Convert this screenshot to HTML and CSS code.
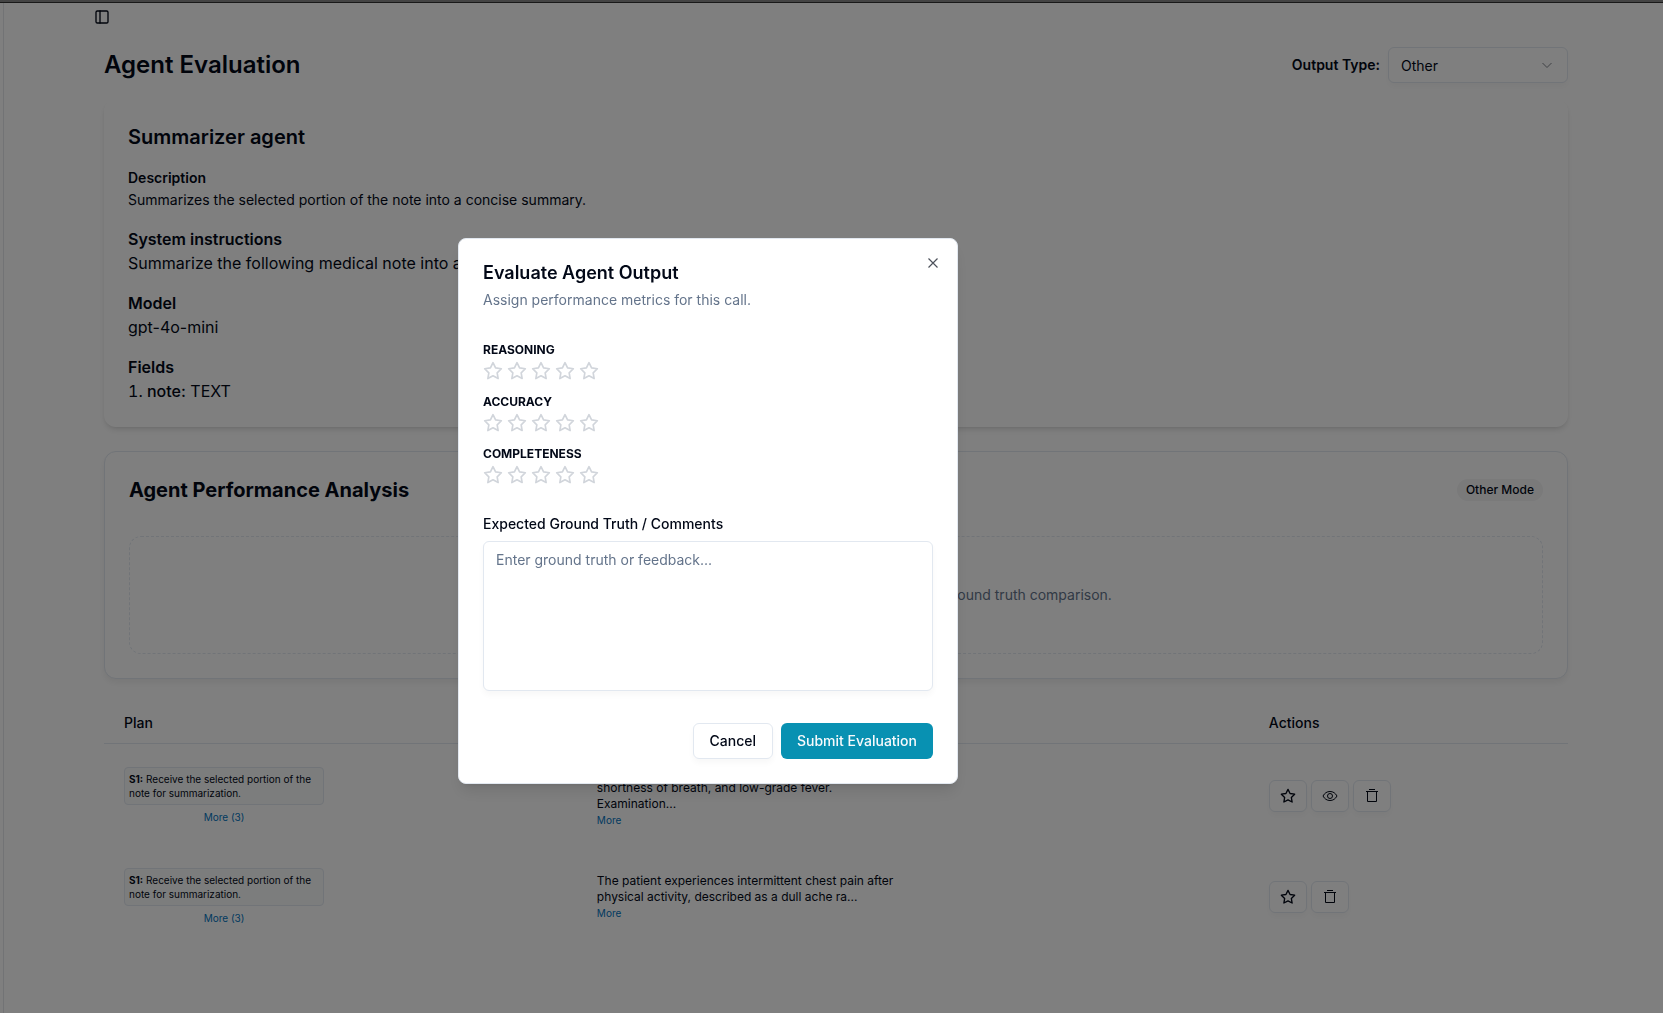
FILE: index.html
```html
<!DOCTYPE html>
<html lang="en">
<head>
    <meta charset="UTF-8">
    <meta name="viewport" content="width=device-width, initial-scale=1.0">
    <title>Agent Evaluation</title>
    <link rel="stylesheet" href="styles.css">
</head>
<body>
    <svg class="icon-defs" aria-hidden="true">
        <symbol id="icon-star" viewBox="0 0 24 24">
            <polygon points="12 2 15.09 8.26 22 9.27 17 14.14 18.18 21.02 12 17.77 5.82 21.02 7 14.14 2 9.27 8.91 8.26 12 2" fill="none" stroke="currentColor" stroke-width="2" stroke-linecap="round" stroke-linejoin="round"/>
        </symbol>
        <symbol id="icon-eye" viewBox="0 0 16 16">
            <path d="M1 8C2.6 5 5 3.500 8 3.500S13.400 5 15 8C13.400 11 11 12.500 8 12.500S2.600 11 1 8Z" fill="none" stroke="currentColor" stroke-linejoin="round"/>
            <circle cx="8" cy="8" r="2.500" fill="none" stroke="currentColor"/>
        </symbol>
        <symbol id="icon-trash" viewBox="0 0 16 16">
            <path d="M5 1.500h6M2 3.500h12M3.500 3.500v10h9v-10" fill="none" stroke="currentColor"/>
        </symbol>
    </svg>

    <div class="topbar"></div>
    <div class="layout">
        <aside class="sidebar"></aside>
        <main class="main">
            <button class="sidebar-toggle" aria-label="Toggle sidebar">
                <svg width="16" height="16" viewBox="0 0 24 24" fill="none" stroke="currentColor" stroke-width="2" stroke-linecap="round" stroke-linejoin="round"><rect x="3" y="3" width="18" height="18" rx="2"/><path d="M9 3v18"/></svg>
            </button>

            <div class="content">
                <div class="page-header">
                    <h1>Agent Evaluation</h1>
                    <div class="output-type">
                        <label for="output_type">Output Type:</label>
                        <div class="select-wrap">
                            <select id="output_type">
                                <option>Other</option>
                            </select>
                            <svg class="chevron" width="16" height="16" viewBox="0 0 16 16" fill="none" stroke="currentColor"><path d="M3.500 6 8 10.500 12.500 6"/></svg>
                        </div>
                    </div>
                </div>

                <section class="card agent-card">
                    <h2>Summarizer agent</h2>
                    <div class="field small">
                        <h3>Description</h3>
                        <p>Summarizes the selected portion of the note into a concise summary.</p>
                    </div>
                    <div class="field">
                        <h3>System instructions</h3>
                        <p>Summarize the following medical note into a concise summary.</p>
                    </div>
                    <div class="field">
                        <h3>Model</h3>
                        <p>gpt-4o-mini</p>
                    </div>
                    <div class="field">
                        <h3>Fields</h3>
                        <ol>
                            <li><span class="field-name">note:</span> TEXT</li>
                        </ol>
                    </div>
                </section>

                <section class="card analysis-card">
                    <div class="analysis-header">
                        <h2>Agent Performance Analysis</h2>
                        <span class="badge">Other Mode</span>
                    </div>
                    <div class="empty">Add expected outputs to these calls in the table to enable ground truth comparison.</div>
                </section>

                <table class="calls">
                    <thead>
                        <tr>
                            <th class="col-plan">Plan</th>
                            <th class="col-input">Input</th>
                            <th class="col-actions">Actions</th>
                        </tr>
                    </thead>
                    <tbody>
                        <tr>
                            <td>
                                <div class="plan">
                                    <div class="step"><b>S1:</b> Receive the selected portion of the note for summarization.</div>
                                    <a class="more" href="#">More (3)</a>
                                </div>
                            </td>
                            <td>
                                <p class="note">The patient presents with a dry cough, mild shortness of breath, and low-grade fever. Examination...</p>
                                <a class="more" href="#">More</a>
                            </td>
                            <td>
                                <div class="actions">
                                    <button aria-label="Evaluate"><svg width="16" height="16"><use href="#icon-star"/></svg></button>
                                    <button aria-label="View"><svg width="16" height="16"><use href="#icon-eye"/></svg></button>
                                    <button aria-label="Delete"><svg width="16" height="16"><use href="#icon-trash"/></svg></button>
                                </div>
                            </td>
                        </tr>
                        <tr>
                            <td>
                                <div class="plan">
                                    <div class="step"><b>S1:</b> Receive the selected portion of the note for summarization.</div>
                                    <a class="more" href="#">More (3)</a>
                                </div>
                            </td>
                            <td>
                                <p class="note">The patient experiences intermittent chest pain after physical activity, described as a dull ache ra...</p>
                                <a class="more" href="#">More</a>
                            </td>
                            <td>
                                <div class="actions">
                                    <button aria-label="Evaluate"><svg width="16" height="16"><use href="#icon-star"/></svg></button>
                                    <button aria-label="Delete"><svg width="16" height="16"><use href="#icon-trash"/></svg></button>
                                </div>
                            </td>
                        </tr>
                    </tbody>
                </table>
            </div>
        </main>
    </div>

    <div class="overlay">
        <div class="modal" role="dialog" aria-modal="true" aria-labelledby="modal_title">
            <button class="close" aria-label="Close">
                <svg width="16" height="16" viewBox="0 0 16 16" fill="none" stroke="currentColor" stroke-width="1.200"><path d="M3.500 3.500l9 9M12.500 3.500l-9 9"/></svg>
            </button>
            <div class="modal-header">
                <h2 id="modal_title">Evaluate Agent Output</h2>
                <p>Assign performance metrics for this call.</p>
            </div>

            <div class="metrics">
                <div class="metric" role="group" aria-labelledby="m_reasoning">
                    <span id="m_reasoning" class="metric-name">Reasoning</span>
                    <div class="stars">
                        <button aria-label="1 star"><svg width="20" height="20"><use href="#icon-star"/></svg></button>
                        <button aria-label="2 stars"><svg width="20" height="20"><use href="#icon-star"/></svg></button>
                        <button aria-label="3 stars"><svg width="20" height="20"><use href="#icon-star"/></svg></button>
                        <button aria-label="4 stars"><svg width="20" height="20"><use href="#icon-star"/></svg></button>
                        <button aria-label="5 stars"><svg width="20" height="20"><use href="#icon-star"/></svg></button>
                    </div>
                </div>
                <div class="metric" role="group" aria-labelledby="m_accuracy">
                    <span id="m_accuracy" class="metric-name">Accuracy</span>
                    <div class="stars">
                        <button aria-label="1 star"><svg width="20" height="20"><use href="#icon-star"/></svg></button>
                        <button aria-label="2 stars"><svg width="20" height="20"><use href="#icon-star"/></svg></button>
                        <button aria-label="3 stars"><svg width="20" height="20"><use href="#icon-star"/></svg></button>
                        <button aria-label="4 stars"><svg width="20" height="20"><use href="#icon-star"/></svg></button>
                        <button aria-label="5 stars"><svg width="20" height="20"><use href="#icon-star"/></svg></button>
                    </div>
                </div>
                <div class="metric" role="group" aria-labelledby="m_completeness">
                    <span id="m_completeness" class="metric-name">Completeness</span>
                    <div class="stars">
                        <button aria-label="1 star"><svg width="20" height="20"><use href="#icon-star"/></svg></button>
                        <button aria-label="2 stars"><svg width="20" height="20"><use href="#icon-star"/></svg></button>
                        <button aria-label="3 stars"><svg width="20" height="20"><use href="#icon-star"/></svg></button>
                        <button aria-label="4 stars"><svg width="20" height="20"><use href="#icon-star"/></svg></button>
                        <button aria-label="5 stars"><svg width="20" height="20"><use href="#icon-star"/></svg></button>
                    </div>
                </div>
            </div>

            <div class="comments">
                <label for="comments">Expected Ground Truth / Comments</label>
                <textarea id="comments" placeholder="Enter ground truth or feedback..."></textarea>
            </div>

            <div class="modal-footer">
                <button class="btn">Cancel</button>
                <button class="btn btn-primary">Submit Evaluation</button>
            </div>
        </div>
    </div>
</body>
</html>
```

FILE: styles.css
```css
* {
    box-sizing: border-box;
}
body {
    margin: 0;
    min-height: 100vh;
    display: flex;
    flex-direction: column;
    background-color: #fff;
    color: #020817;
    font-family: Inter, sans-serif;
    font-size: 16px;
    line-height: 24px;
}
h1, h2, h3, p, ol {
    margin: 0;
    padding: 0;
}
button, select, textarea {
    font-family: inherit;
    color: inherit;
}
button {
    display: flex;
    align-items: center;
    justify-content: center;
    padding: 0;
    border: none;
    background: none;
    cursor: pointer;
}
.icon-defs {
    position: absolute;
    width: 0;
    height: 0;
}

/* page shell */
.topbar {
    height: 3px;
    background-color: #888;
    border-bottom: 1px solid #333;
}
.layout {
    flex: 1;
    display: flex;
}
.sidebar {
    width: 4px;
    border-right: 1px solid #e5e7eb;
}
.main {
    flex: 1;
    padding: 0 95px 0 84px;
}
.sidebar-toggle {
    width: 28px;
    height: 28px;
}
.content {
    margin: 16px 0 0 16px;
}
.page-header {
    display: flex;
    justify-content: space-between;
    align-items: center;
    margin-bottom: 16px;
}
h1 {
    font-size: 24px;
    line-height: 32px;
    font-weight: 600;
}
.output-type {
    display: flex;
    align-items: center;
    gap: 8px;
    font-size: 14px;
}
.output-type label {
    font-weight: 600;
}
.select-wrap {
    position: relative;
}
select {
    appearance: none;
    display: block;
    width: 180px;
    height: 36px;
    padding: 0 12px;
    border: 1px solid #e2e8f0;
    border-radius: 6px;
    background-color: #fff;
    font-size: 14px;
    box-shadow: 0 4px 6px rgba(0, 0, 0, 0.03);
}
.chevron {
    position: absolute;
    right: 13px;
    top: 10px;
    opacity: 0.5;
    pointer-events: none;
}

/* cards */
.card {
    margin-bottom: 24px;
    padding: 24px;
    border-radius: 12px;
    background-color: #fff;
    box-shadow: 0 4px 6px -1px rgba(0, 0, 0, 0.1), 0 2px 4px -2px rgba(0, 0, 0, 0.1);
}
.card h2 {
    font-size: 20px;
    line-height: 28px;
    font-weight: 600;
}
.field {
    margin-top: 16px;
}
.field h3 {
    font-size: 16px;
    font-weight: 600;
}
.small, .small h3 {
    font-size: 14px;
    line-height: 22px;
}
.field ol {
    list-style-position: inside;
}
.field-name {
    font-weight: 500;
}
.analysis-card {
    border: 1px solid #e2e8f0;
    box-shadow: 0 4px 6px rgba(0, 0, 0, 0.06);
}
.analysis-card h2 {
    font-weight: 700;
}
.analysis-header {
    display: flex;
    justify-content: space-between;
    align-items: center;
    margin-bottom: 32px;
}
.badge {
    padding: 3px 9px;
    border-radius: 12px;
    background-color: #f4f4f5;
    font-size: 12px;
    line-height: 16px;
    font-weight: 500;
}
.empty {
    padding: 48px;
    border: 1px dashed #e2e8f0;
    border-radius: 12px;
    text-align: center;
    font-size: 14px;
    line-height: 20px;
    color: #64748b;
}

/* calls table */
.calls {
    width: 100%;
    table-layout: fixed;
    border-spacing: 0;
}
.calls th {
    height: 41px;
    padding: 0 20px;
    border-bottom: 1px solid #e2e8f0;
    text-align: left;
    font-size: 14px;
    line-height: 20px;
    font-weight: 500;
}
.calls td {
    padding: 20px;
    vertical-align: middle;
    font-size: 12px;
    line-height: 16px;
}
.col-plan {
    width: 32.3%;
}
.col-actions {
    width: 21.8%;
}
.plan {
    display: flex;
    flex-direction: column;
    align-items: center;
    gap: 4px;
    width: 200px;
}
.step {
    padding: 4px;
    border: 1px solid #e2e8f0;
    border-radius: 4px;
    background-color: #f8fafa;
    font-size: 10px;
    line-height: 14px;
}
.note {
    max-width: 300px;
}
.more {
    display: block;
    font-size: 10px;
    line-height: 16px;
    color: #0274be;
    text-decoration: none;
}
.actions {
    display: flex;
    gap: 4px;
}
.actions button {
    width: 38px;
    height: 32px;
    border: 1px solid #e2e8f0;
    border-radius: 6px;
    box-shadow: 0 4px 6px rgba(0, 0, 0, 0.03);
}

/* evaluation dialog, sits left of centre */
.overlay {
    position: fixed;
    inset: 0;
    display: flex;
    align-items: center;
    justify-content: center;
    padding: 8px 247px 0 0;
    background-color: rgba(0, 0, 0, 0.5);
}
.modal {
    position: relative;
    display: flex;
    flex-direction: column;
    gap: 32px;
    width: 500px;
    padding: 24px;
    border: 1px solid #e2e8f0;
    border-radius: 8px;
    background-color: #fff;
    box-shadow: 0 10px 15px -3px rgba(0, 0, 0, 0.1), 0 4px 6px -4px rgba(0, 0, 0, 0.1);
}
.close {
    position: absolute;
    top: 16px;
    right: 16px;
    opacity: 0.7;
}
.modal-header {
    display: flex;
    flex-direction: column;
    gap: 7px;
}
.modal-header h2 {
    font-size: 18px;
    line-height: 20px;
    font-weight: 600;
}
.modal-header p {
    font-size: 14px;
    line-height: 20px;
    color: #64748b;
}
.metrics {
    display: flex;
    flex-direction: column;
    gap: 13px;
}
.metric {
    display: flex;
    flex-direction: column;
    gap: 3px;
}
.metric-name {
    font-size: 12px;
    line-height: 16px;
    font-weight: 700;
    text-transform: uppercase;
}
.stars {
    display: flex;
    gap: 4px;
    color: #d1d5db;
}
.comments {
    display: flex;
    flex-direction: column;
    gap: 10px;
}
.comments label {
    font-size: 14px;
    line-height: 14px;
    font-weight: 500;
}
textarea {
    height: 150px;
    padding: 8px 12px;
    border: 1px solid #e2e8f0;
    border-radius: 6px;
    resize: none;
    font-size: 14px;
    line-height: 20px;
    box-shadow: 0 4px 6px rgba(0, 0, 0, 0.03);
}
textarea::placeholder {
    color: #64748b;
}
.modal-footer {
    display: flex;
    justify-content: flex-end;
    gap: 8px;
}
.btn {
    height: 36px;
    padding: 0 16px;
    border: 1px solid #e2e8f0;
    border-radius: 6px;
    font-size: 14px;
    font-weight: 500;
    box-shadow: 0 4px 6px rgba(0, 0, 0, 0.03);
}
.btn-primary {
    border: none;
    background-color: #0891b2;
    color: #f8fafc;
    box-shadow: none;
}
```
